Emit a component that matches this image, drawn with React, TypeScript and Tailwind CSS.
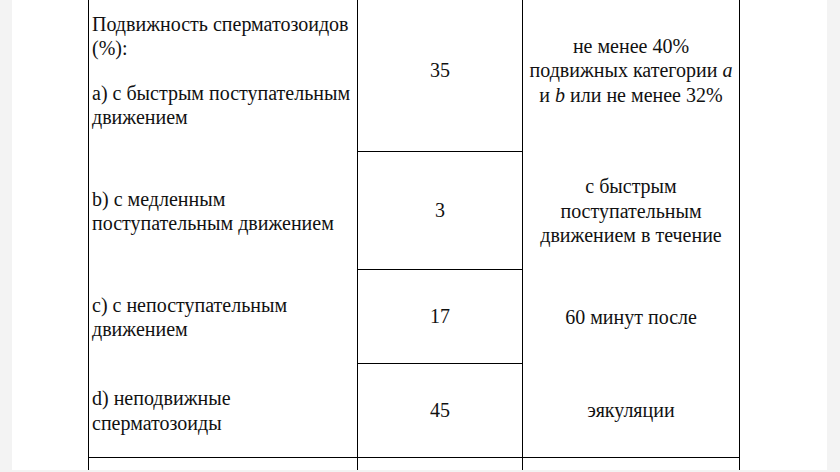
import type { ReactNode } from "react";

const Cell = ({
	children,
	className = "",
}: {
	children?: ReactNode;
	className?: string;
}) => (
	<div className={`flex items-center border-r border-black ${className}`}>
		{children}
	</div>
);

const Left = ({ lines }: { lines: string[] }) => (
	<div className="pl-[3px]">
		{lines.map((l) => (
			<div key={l} className="whitespace-nowrap">
				{l}
			</div>
		))}
	</div>
);

export default function App() {
	return (
		<div className="w-[840px] h-[472px] overflow-hidden bg-[#f3f3f3] pl-[12px] text-[#111] font-['Liberation_Serif','Times_New_Roman',serif]">
			<div className="w-[815px] h-[470px] bg-white overflow-hidden">
				<div className="ml-[76px] -mt-[11px] grid grid-cols-[269px_165px_217px] grid-rows-[163px_118px_94px_94px_60px] border-l border-black text-[20px] leading-[24.5px]">
					{/* row a */}
					<Cell>
						<div className="pl-[3px]">
							<div className="whitespace-nowrap">Подвижность сперматозоидов</div>
							<div>(%):</div>
							<div className="mt-[20px] whitespace-nowrap">
								а) с быстрым поступательным
							</div>
							<div>движением</div>
						</div>
					</Cell>
					<Cell className="justify-center border-b-[1.5px]">35</Cell>
					<Cell className="justify-center text-center">
						<div>
							<div>не менее 40%</div>
							<div className="whitespace-nowrap">
								подвижных категории <i>a</i>
							</div>
							<div className="whitespace-nowrap">
								и <i>b</i> или не менее 32%
							</div>
						</div>
					</Cell>

					{/* row b */}
					<Cell>
						<Left lines={["b) с медленным", "поступательным движением"]} />
					</Cell>
					<Cell className="justify-center border-b-[1.5px]">3</Cell>
					<Cell className="justify-center text-center">
						<div>
							<div>с быстрым</div>
							<div>поступательным</div>
							<div>движением в течение</div>
						</div>
					</Cell>

					{/* row c */}
					<Cell>
						<Left lines={["c) с непоступательным", "движением"]} />
					</Cell>
					<Cell className="justify-center border-b-[1.5px]">17</Cell>
					<Cell className="justify-center">60 минут после</Cell>

					{/* row d */}
					<Cell className="border-b-[1.5px]">
						<Left lines={["d) неподвижные", "сперматозоиды"]} />
					</Cell>
					<Cell className="justify-center border-b-[1.5px]">45</Cell>
					<Cell className="justify-center border-b-[1.5px]">эякуляции</Cell>

					{/* next row */}
					<Cell />
					<Cell />
					<Cell />
				</div>
			</div>
		</div>
	);
}
